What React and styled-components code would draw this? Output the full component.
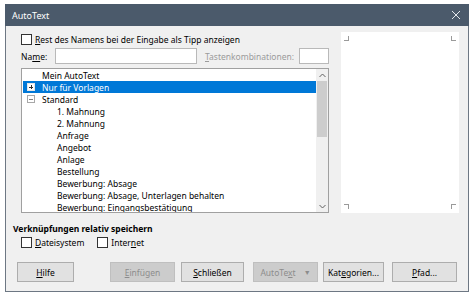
import React from "react";
import styled, { createGlobalStyle } from "styled-components";

const Global = createGlobalStyle`
  html, body { margin: 0; padding: 0; background: #ffffff; }
  body { font-family: "Noto Sans", "Open Sans", sans-serif; font-size: 8.5px; color: #000; }
  * { box-sizing: border-box; }
`;

const Window = styled.div`
  margin: 4px 0 0 5px;
  width: 464px;
  height: 288px;
  border: 1px solid #6d7783;
  border-top: none;
  background: #f0f0f0;
  display: flex;
  flex-direction: column;
`;

const TitleBar = styled.div`
  height: 22px;
  background: #4b5a6b;
  color: #fff;
  display: flex;
  align-items: center;
  justify-content: space-between;
  padding: 0 8px 0 7px;
  font-size: 9px;
  margin: 0 -1px;
`;

const Body = styled.div`
  flex: 1;
  display: flex;
  flex-direction: column;
  padding: 6px 9px 0 7px;
`;

const Upper = styled.div`
  display: flex;
  gap: 12px;
  padding-left: 8px;
`;

const LeftCol = styled.div`
  width: 308px;
  display: flex;
  flex-direction: column;
`;

const CheckRow = styled.label`
  display: flex;
  align-items: center;
  gap: 3px;
  height: 12px;
  margin-top: 1px;
  white-space: nowrap;
`;

const Box = styled.span`
  width: 11px;
  height: 11px;
  border: 1px solid #333;
  background: #fff;
  flex: none;
`;

const U = styled.span`
  text-decoration: underline;
`;

const NameRow = styled.div`
  display: flex;
  align-items: center;
  height: 16px;
  margin-top: 3px;
`;

const Label = styled.span`
  flex: none;
  width: ${(p) => p.$w}px;
  margin-left: ${(p) => p.$ml || 0}px;
  color: ${(p) => (p.$disabled ? "#9b9b9b" : "#000")};
  white-space: nowrap;
`;

const Input = styled.div`
  flex: none;
  width: ${(p) => p.$w}px;
  height: 16px;
  background: #fff;
  border: 1px solid #b9b9b9;
`;

const Tree = styled.div`
  margin-top: 4px;
  height: 145px;
  border: 1px solid #a0a0a0;
  background: #fff;
  display: flex;
`;

const Rows = styled.div`
  flex: 1;
  padding-left: 1px;
  overflow: hidden;
`;

const Row = styled.div`
  height: 12px;
  display: flex;
  align-items: center;
  padding-left: ${(p) => p.$indent}px;
  background: ${(p) => (p.$sel ? "#0078d7" : "transparent")};
  color: ${(p) => (p.$sel ? "#fff" : "#000")};
  white-space: nowrap;
  position: relative;
`;

const Expander = styled.span`
  position: absolute;
  left: 4px;
  top: 2px;
  width: 8px;
  height: 8px;
  border: 1px solid ${(p) => (p.$sel ? "#e6e6e6" : "#a8a8a8")};
  background: #fff;
  &::before {
    content: "";
    position: absolute;
    left: 1px;
    right: 1px;
    top: 2.5px;
    height: 1px;
    background: ${(p) => (p.$sel ? "#2b2b2b" : "#808080")};
  }
  &::after {
    content: "";
    display: ${(p) => (p.$plus ? "block" : "none")};
    position: absolute;
    top: 1px;
    bottom: 1px;
    left: 2.5px;
    width: 1px;
    background: ${(p) => (p.$sel ? "#2b2b2b" : "#808080")};
  }
`;

const Scroll = styled.div`
  width: 12px;
  background: #f0f0f0;
  display: flex;
  flex-direction: column;
`;

const Arrow = styled.div`
  height: 12px;
  display: flex;
  align-items: center;
  justify-content: center;
`;

const Thumb = styled.div`
  height: 56px;
  margin: 0 1px;
  background: #cdcdcd;
`;

const Track = styled.div`
  flex: 1;
`;

const Preview = styled.div`
  width: 119px;
  height: 181px;
  background: #fff;
  position: relative;
`;

const Mark = styled.span`
  position: absolute;
  width: 5px;
  height: 5px;
  border-color: #9a9a9a;
  border-style: solid;
  border-width: 0;
  ${(p) => p.$pos}
`;

const Section = styled.div`
  font-weight: 700;
  margin-top: 9px;
  height: 12px;
  display: flex;
  align-items: center;
`;

const Checks = styled.div`
  display: flex;
  gap: 13px;
  padding-left: 8px;
  margin-top: 1px;
`;

const Buttons = styled.div`
  display: flex;
  margin-top: 14px;
  padding-left: 4px;
`;

const Button = styled.div`
  width: ${(p) => p.$w}px;
  margin-left: ${(p) => p.$ml || 0}px;
  height: 20px;
  border: 1px solid ${(p) => (p.$disabled ? "#bfbfbf" : "#adadad")};
  background: ${(p) => (p.$disabled ? "#cccccc" : "#e1e1e1")};
  color: ${(p) => (p.$disabled ? "#8c8c8c" : "#000")};
  display: flex;
  align-items: center;
  justify-content: center;
  gap: 8px;
  white-space: nowrap;
`;

const Caret = styled.span`
  font-size: 7px;
  color: #8c8c8c;
`;

const items = [
  { t: "Mein AutoText", i: 19 },
  { t: "Nur für Vorlagen", i: 19, sel: true, exp: "plus" },
  { t: "Standard", i: 19, exp: "minus" },
  { t: "1. Mahnung", i: 34 },
  { t: "2. Mahnung", i: 34 },
  { t: "Anfrage", i: 34 },
  { t: "Angebot", i: 34 },
  { t: "Anlage", i: 34 },
  { t: "Bestellung", i: 34 },
  { t: "Bewerbung: Absage", i: 34 },
  { t: "Bewerbung: Absage, Unterlagen behalten", i: 34 },
  { t: "Bewerbung: Eingangsbestätigung", i: 34 },
];

export default function App() {
  return (
    <>
      <Global />
      <Window>
        <TitleBar>
          <span>AutoText</span>
          <svg width="10" height="10" viewBox="0 0 10 10">
            <path d="M1 1 L9 9 M9 1 L1 9" stroke="#e3e7ec" strokeWidth="1" fill="none" />
          </svg>
        </TitleBar>
        <Body>
          <Upper>
            <LeftCol>
              <CheckRow>
                <Box />
                <span>
                  <U>R</U>est des Namens bei der Eingabe als Tipp anzeigen
                </span>
              </CheckRow>
              <NameRow>
                <Label $w={34}>
                  Na<U>m</U>e:
                </Label>
                <Input $w={142} />
                <Label $w={94} $ml={8} $disabled>
                  <U>T</U>astenkombinationen:
                </Label>
                <Input $w={30} />
              </NameRow>
              <Tree>
                <Rows>
                  {items.map((it) => (
                    <Row key={it.t} $indent={it.i} $sel={it.sel}>
                      {it.exp && <Expander $sel={it.sel} $plus={it.exp === "plus"} />}
                      {it.t}
                    </Row>
                  ))}
                </Rows>
                <Scroll>
                  <Arrow>
                    <svg width="7" height="5" viewBox="0 0 7 5">
                      <path d="M0.5 4 L3.5 1 L6.5 4" fill="none" stroke="#606060" strokeWidth="1" />
                    </svg>
                  </Arrow>
                  <Thumb />
                  <Track />
                  <Arrow>
                    <svg width="7" height="5" viewBox="0 0 7 5">
                      <path d="M0.5 1 L3.5 4 L6.5 1" fill="none" stroke="#606060" strokeWidth="1" />
                    </svg>
                  </Arrow>
                </Scroll>
              </Tree>
            </LeftCol>
            <Preview>
              <Mark $pos="left: 3px; top: 4px; border-right-width: 1px; border-bottom-width: 1px;" />
              <Mark $pos="right: 3px; top: 4px; border-left-width: 1px; border-bottom-width: 1px;" />
              <Mark $pos="left: 3px; bottom: 4px; border-right-width: 1px; border-top-width: 1px;" />
              <Mark $pos="right: 3px; bottom: 4px; border-left-width: 1px; border-top-width: 1px;" />
            </Preview>
          </Upper>
          <Section>Verknüpfungen relativ speichern</Section>
          <Checks>
            <CheckRow>
              <Box />
              <span>
                <U>D</U>ateisystem
              </span>
            </CheckRow>
            <CheckRow>
              <Box />
              <span>
                Inter<U>n</U>et
              </span>
            </CheckRow>
          </Checks>
          <Buttons>
            <Button $w={57}>
              <span>
                <U>H</U>ilfe
              </span>
            </Button>
            <Button $w={65} $ml={36} $disabled>
              <span>
                <U>E</U>infügen
              </span>
            </Button>
            <Button $w={63} $ml={6}>
              <span>
                <U>S</U>chließen
              </span>
            </Button>
            <Button $w={65} $ml={9} $disabled>
              <span>
                AutoTe<U>x</U>t
              </span>
              <Caret>▼</Caret>
            </Button>
            <Button $w={61} $ml={5}>
              <span>
                Kat<U>e</U>gorien...
              </span>
            </Button>
            <Button $w={65} $ml={8}>
              <span>
                <U>P</U>fad...
              </span>
            </Button>
          </Buttons>
        </Body>
      </Window>
    </>
  );
}
